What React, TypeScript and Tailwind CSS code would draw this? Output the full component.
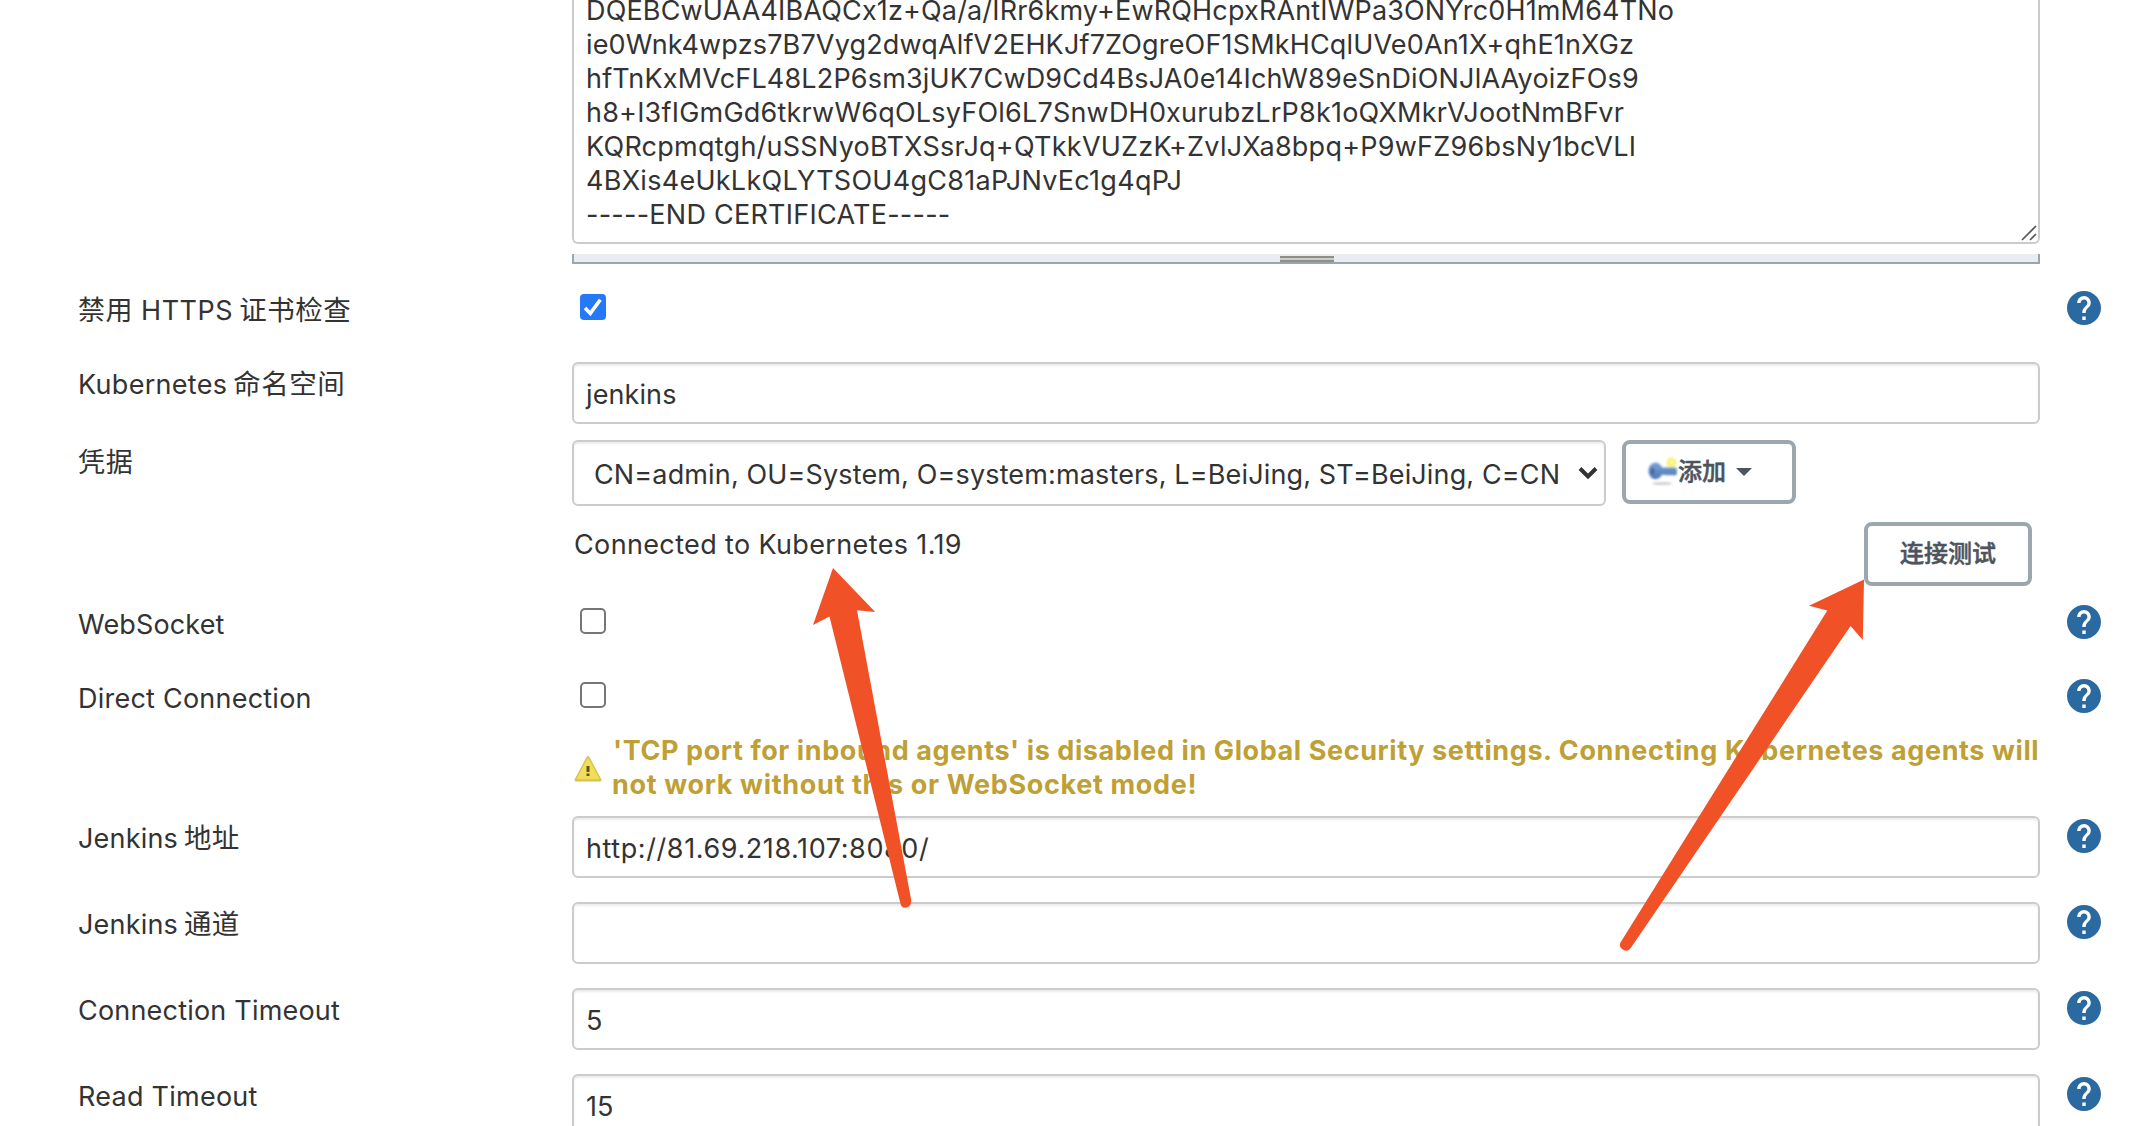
import type { ReactNode } from 'react';

const certificate = [
  { text: 'DQEBCwUAA4IBAQCx1z+Qa/a/IRr6kmy+EwRQHcpxRAntIWPa3ONYrc0H1mM64TNo', spacing: 'tracking-[0.16px]' },
  { text: 'ie0Wnk4wpzs7B7Vyg2dwqAlfV2EHKJf7ZOgreOF1SMkHCqlUVe0An1X+qhE1nXGz', spacing: 'tracking-[0.16px]' },
  { text: 'hfTnKxMVcFL48L2P6sm3jUK7CwD9Cd4BsJA0e14IchW89eSnDiONJlAAyoizFOs9', spacing: 'tracking-[0.17px]' },
  { text: 'h8+I3fIGmGd6tkrwW6qOLsyFOl6L7SnwDH0xurubzLrP8k1oQXMkrVJootNmBFvr', spacing: 'tracking-[0.21px]' },
  { text: 'KQRcpmqtgh/uSSNyoBTXSsrJq+QTkkVUZzK+ZvlJXa8bpq+P9wFZ96bsNy1bcVLI', spacing: 'tracking-[0.25px]' },
  { text: '4BXis4eUkLkQLYTSOU4gC81aPJNvEc1g4qPJ', spacing: 'tracking-[0.27px]' },
  { text: '-----END CERTIFICATE-----', spacing: 'tracking-[0.25px]' },
];

function HelpIcon() {
  return (
    <svg className="mt-[3px] ml-[27px] size-[34px] shrink-0" viewBox="2 2 20 20" fill="#2b6aa0">
      <path d="M12 2C6.48 2 2 6.48 2 12s4.48 10 10 10 10-4.48 10-10S17.52 2 12 2zm1 17h-2v-2h2v2zm2.07-7.75l-.9.92C13.45 12.9 13 13.5 13 15h-2v-.5c0-1.1.45-2.1 1.17-2.83l1.24-1.26c.37-.36.59-.86.59-1.41 0-1.1-.9-2-2-2s-2 .9-2 2H8c0-2.21 1.79-4 4-4s4 1.79 4 4c0 .88-.36 1.68-.93 2.25z" />
    </svg>
  );
}

function Cjk({ children }: { children: ReactNode }) {
  return <span className="-ml-[2px] text-[27.5px] leading-none tracking-[0.5px]">{children}</span>;
}

function Row({ label, labelClass = '', height, help, children }: { label?: ReactNode; labelClass?: string; height: string; help?: boolean; children: ReactNode }) {
  return (
    <div className={'flex shrink-0 items-start ' + height}>
      <div className={'w-[494px] shrink-0 whitespace-nowrap pt-[6px] ' + labelClass}>{label}</div>
      <div className="w-[1468px] shrink-0">{children}</div>
      {help && <HelpIcon />}
    </div>
  );
}

function TextInput({ value, spacing = '' }: { value: string; spacing?: string }) {
  return (
    <div className={'h-[62px] rounded-md border-2 border-[#ccc] bg-white pt-[14px] pl-[12px] shadow-[inset_0_2px_2px_rgba(0,0,0,0.075)] ' + spacing}>
      {value}
    </div>
  );
}

function Checkbox({ checked }: { checked?: boolean }) {
  return checked ? (
    <div className="mt-[6px] ml-[8px] flex size-[26px] items-center justify-center rounded-[4px] bg-[#2579f6]">
      <svg className="size-[26px]" viewBox="0 0 26 26" fill="none" stroke="#fff" strokeWidth="3.6">
        <path d="M5 14 10.3 19.4 20.3 5.8" />
      </svg>
    </div>
  ) : (
    <div className="mt-[6px] ml-[8px] size-[26px] rounded-[5px] border-2 border-[#767676] bg-white" />
  );
}

function KeyIcon() {
  return (
    <svg className="size-[32px] shrink-0" viewBox="0 0 32 32">
      <defs>
        <filter id="soft" x="-30%" y="-100%" width="160%" height="300%"><feGaussianBlur stdDeviation="1.2" /></filter>
        <filter id="edge" x="-20%" y="-20%" width="140%" height="140%"><feGaussianBlur stdDeviation="0.8" /></filter>
        <linearGradient id="steel" x1="0" y1="0" x2="0" y2="1">
          <stop offset="0" stopColor="#7da4d6" />
          <stop offset="1" stopColor="#4a76b4" />
        </linearGradient>
      </defs>
      <ellipse cx="16" cy="27.5" rx="10" ry="1.3" fill="#c8c8c8" filter="url(#soft)" />
      <circle cx="25.5" cy="6.5" r="5" fill="#fdf36f" filter="url(#edge)" />
      <circle cx="25.5" cy="6.5" r="1.8" fill="#fffbc0" filter="url(#edge)" />
      <g filter="url(#edge)">
        <path d="M9.5 6.500C5.400 6.500 2.500 10.200 2.500 14.700s2.900 8.300 7 8.300c3 0 5.300-1.700 6.400-4.300h3l1.600.8 1.800-.8 1.800.8 1.700-.8 2 .8 3-.8V12L28.500 11.500H16C15 8.500 12.500 6.500 9.500 6.500Z" fill="url(#steel)" />
        <ellipse cx="6.500" cy="15" rx="1.800" ry="3.200" fill="#3f669b" />
      </g>
    </svg>
  );
}

function WarningIcon() {
  return (
    <svg className="mt-[21px] ml-[1px] size-[30px] shrink-0" viewBox="0 0 30 30">
      <defs>
        <filter id="haze" x="-10%" y="-10%" width="120%" height="120%"><feGaussianBlur stdDeviation="0.7" /></filter>
      </defs>
      <g filter="url(#haze)">
        <path d="M15 3.500 27 26H3Z" fill="#d5c355" stroke="#d5c355" strokeWidth="3" strokeLinejoin="round" />
        <path d="M15 5 25.500 24.500H4.500Z" fill="#f2de58" stroke="#f2de58" strokeWidth="1.500" strokeLinejoin="round" />
        <path d="M15 12v6M15 19.500v2.500" stroke="#5d551f" strokeWidth="3" />
      </g>
    </svg>
  );
}

function Arrows() {
  return (
    <svg className="pointer-events-none absolute inset-0" width="2134" height="1126" viewBox="0 0 2134 1126" fill="#f05126">
      <path d="M833 568 875.200 612 857 610.200 911.200 900C911.500 905 909 907.500 905.500 907.700 902.500 907.800 900.800 906 900.300 903L829.500 616.500 813 625Z" />
      <path d="M1864 579.500 1862.800 640 1850.600 626 1631.800 946.500C1629.500 950.500 1626.500 951.500 1623.500 950 1620 948 1619 945.500 1620.500 942.500L1827.300 610.500 1809 605.700Z" />
    </svg>
  );
}

export default function App() {
  return (
    <div className="relative flex h-[1126px] w-[2134px] flex-col overflow-hidden bg-white pl-[78px] font-['Inter','Noto_Sans_CJK_SC',sans-serif] text-[27px] leading-[34px] text-[#333]">
      <div className="ml-[494px] w-[1468px] shrink-0">
        <div className="relative flex h-[244px] flex-col justify-end overflow-hidden rounded-b-md border-2 border-t-0 border-[#ccc] pb-[10px] pl-[12px]">
          {certificate.map((line) => (
            <div key={line.text} className={'shrink-0 whitespace-nowrap ' + line.spacing}>{line.text}</div>
          ))}
          <svg className="absolute right-[1px] bottom-[1px] size-[16px]" viewBox="0 0 16 16" stroke="#555" strokeWidth="1.600">
            <path d="M1 15 15 1M9 15 15 9" />
          </svg>
        </div>
        <div className="mt-[10px] flex h-[10px] justify-center border-2 border-t-0 border-[#9ba7ad] bg-[#e9edf1] pt-[2px] pl-[2px]">
          <div className="h-[6px] w-[54px] border-y-2 border-[#8e8f89] bg-[#cbcccc]" />
        </div>
      </div>

      <div className="mt-[24px] flex flex-col">
        <Row label={<>禁用 HTTPS <Cjk>证书检查</Cjk></>} labelClass="tracking-[0.5px]" height="h-[74px]" help><Checkbox checked /></Row>
        <Row label={<>Kubernetes <Cjk>命名空间</Cjk></>} labelClass="tracking-[0.3px]" height="h-[78px]"><TextInput value="jenkins" spacing="tracking-[0.1px]" /></Row>
        <Row label="凭据" labelClass="tracking-[0.8px]" height="h-[82px]">
          <div className="flex gap-4">
            <div className="flex h-[66px] w-[1034px] items-start justify-between rounded-md border-2 border-[#ccc] pt-[16px] pr-[6px] pl-[20px] shadow-[inset_0_2px_2px_rgba(0,0,0,0.075)]">
              <span className="whitespace-nowrap tracking-[0.14px]">CN=admin, OU=System, O=system:masters, L=BeiJing, ST=BeiJing, C=CN</span>
              <svg className="mt-[8px] h-[14px] w-[20px]" viewBox="0 0 20 14" fill="none" stroke="#333" strokeWidth="4">
                <path d="M2 2.500 10 10.500 18 2.500" />
              </svg>
            </div>
            <div className="flex h-[64px] w-[174px] items-center rounded-lg border-4 border-[#9ba7ad] pl-[20px] text-[24px] font-medium text-[#4d545d] [-webkit-text-stroke:0.5px_#4d545d]">
              <KeyIcon />
              <span>添加</span>
              <svg className="mb-[1px] ml-[10px] h-[8px] w-[16px]" viewBox="0 0 16 8" fill="#4d545d"><path d="M0 0h16L8 8Z" /></svg>
            </div>
          </div>
        </Row>
        <Row height="h-[80px]">
          <div className="flex items-start justify-between pr-[8px] pl-[2px]">
            <span className="pt-[6px] tracking-[0.36px]">Connected to Kubernetes 1.19</span>
            <div className="flex h-[64px] w-[168px] items-center justify-center rounded-lg border-4 border-[#9ba7ad] text-[24px] font-medium text-[#4d545d] [-webkit-text-stroke:0.5px_#4d545d]">连接测试</div>
          </div>
        </Row>
        <Row label="WebSocket" labelClass="tracking-[0.15px]" height="h-[74px]" help><Checkbox /></Row>
        <Row label="Direct Connection" labelClass="tracking-[0.23px]" height="h-[57px]" help><Checkbox /></Row>
        <Row height="h-[83px]">
          <div className="flex">
            <WarningIcon />
            <div className="ml-[10px] whitespace-nowrap pt-[1px] font-bold text-[#bfa035]">
              <p className="tracking-[0.585px]">'TCP port for inbound agents' is disabled in Global Security settings. Connecting Kubernetes agents will</p>
              <p className="-ml-[1px] tracking-[0.65px]">not work without this or WebSocket mode!</p>
            </div>
          </div>
        </Row>
        <Row label={<>Jenkins <Cjk>地址</Cjk></>} labelClass="tracking-[0.2px]" height="h-[86px]" help><TextInput value="http://81.69.218.107:8080/" spacing="tracking-[0.59px]" /></Row>
        <Row label={<>Jenkins <Cjk>通道</Cjk></>} labelClass="tracking-[0.2px]" height="h-[86px]" help><TextInput value="" /></Row>
        <Row label="Connection Timeout" labelClass="tracking-[0.2px]" height="h-[86px]" help><TextInput value="5" /></Row>
        <Row label="Read Timeout" labelClass="tracking-[0.25px]" height="h-[86px]" help><TextInput value="15" /></Row>
      </div>
      <Arrows />
    </div>
  );
}
